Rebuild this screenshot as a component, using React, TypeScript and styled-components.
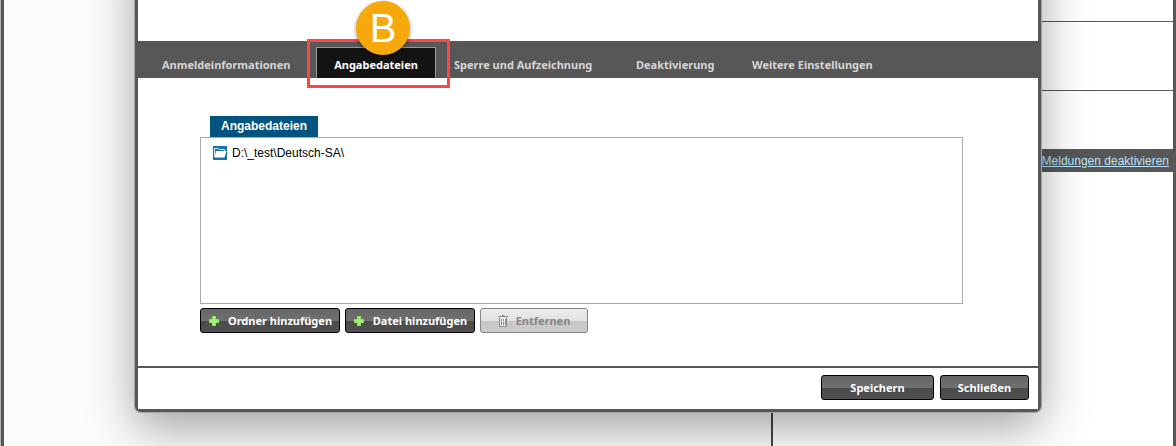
import React from "react";
import styled, { createGlobalStyle, css } from "styled-components";

const frame = "#575757";
const uiFont = '"Noto Sans", "Open Sans", sans-serif';
const textFont = '"Liberation Sans", Arial, sans-serif';

const GlobalStyle = createGlobalStyle`
  * { box-sizing: border-box; }
  body { margin: 0; background: #fff; font-family: ${textFont}; font-size: 12px; }
`;

const Page = styled.div`
  position: relative;
  display: flex;
  min-height: 100vh;
  overflow: hidden;
  border-left: 1px solid #b5b5b5;
`;

const LeftPane = styled.div`
  flex: 767 1 0;
  border-left: 3px solid ${frame};
  background: #fcfcfc;
`;

const RightPane = styled.aside`
  flex: 400 1 0;
  border-left: 2px solid #444;
  border-right: 3px solid ${frame};
  background: #fff;
`;

const PaneRow = styled.div<{ $height: number; $line?: boolean }>`
  height: ${(p) => p.$height}px;
  border-bottom: ${(p) => (p.$line ? `1px solid ${frame}` : "none")};
`;

const NoticeBar = styled.div`
  display: flex;
  justify-content: flex-end;
  align-items: center;
  height: 23px;
  padding-right: 4px;
  background: ${frame};
`;

const NoticeLink = styled.a`
  color: #b9e4fa;
  line-height: 16px;
`;

const Dialog = styled.section`
  position: absolute;
  top: -60px;
  left: 134px;
  right: 135px;
  border: 3px solid ${frame};
  border-radius: 6px;
  background: ${frame};
  box-shadow: 0 0 0 1px #a4a4a4, 0 16px 48px rgba(0, 0, 0, 0.36);
`;

const DialogHead = styled.header`
  height: 98px;
  background: #fff;
`;

const TabBar = styled.nav`
  display: flex;
  align-items: flex-end;
  height: 37px;
  padding-left: 8px;
  background: ${frame};
`;

const TabSlot = styled.div<{ $width: number }>`
  position: relative;
  flex: 0 0 ${(p) => p.$width}px;
`;

const Tab = styled.button<{ $active?: boolean }>`
  display: block;
  height: 31px;
  padding: 4px 15px 0;
  border: 1px solid transparent;
  border-bottom: 0;
  background: none;
  color: #d6d6d6;
  font: bold 11px/16px ${uiFont};
  white-space: nowrap;
  cursor: pointer;
  ${(p) =>
    p.$active &&
    css`
      width: 120px;
      border-color: #999;
      background: #131313;
      color: #fff;
    `}
`;

const Highlight = styled.span`
  position: absolute;
  top: -8px;
  left: -9px;
  width: 143px;
  height: 49px;
  border: 3px solid #fb4747;
  pointer-events: none;
`;

const Marker = styled.span`
  position: absolute;
  top: -46px;
  left: 40px;
  width: 54px;
  height: 54px;
  border-radius: 50%;
  background: #f7a90b;
  box-shadow: 0 2px 4px rgba(0, 0, 0, 0.4);
  color: #fff;
  font: 40px/54px ${textFont};
  text-align: center;
  pointer-events: none;
`;

const Body = styled.div`
  padding: 38px 75px 33px 62px;
  background: #fff;
`;

const ListTitle = styled.h2`
  width: fit-content;
  height: 21px;
  margin: 0 0 0 10px;
  padding: 0 11px;
  background: #00547f;
  color: #fff;
  font: bold 12px/21px ${textFont};
`;

const FileList = styled.ul`
  min-height: 167px;
  margin: 0;
  padding: 7px 12px;
  border: 1px solid #a9a9a9;
  list-style: none;
`;

const FileItem = styled.li`
  display: flex;
  align-items: center;
  gap: 5px;
  height: 16px;
  color: #000;
`;

const Actions = styled.div`
  display: flex;
  gap: 5px;
  margin-top: 4px;
`;

const Footer = styled.footer`
  display: flex;
  justify-content: flex-end;
  gap: 6px;
  margin-top: 2px;
  padding: 7px 9px 9px;
  background: #fff;
`;

const Button = styled.button<{ $width: number }>`
  display: flex;
  align-items: center;
  justify-content: center;
  gap: 8px;
  width: ${(p) => p.$width}px;
  height: 25px;
  padding: 1px 0 0;
  border: 1px solid #000;
  border-radius: 3px;
  background: linear-gradient(#666, #707070 50%, #4b4b4b 50%, #505050);
  color: #fff;
  font: bold 11px/16px ${uiFont};
  white-space: nowrap;
  cursor: pointer;
  &:disabled {
    border-color: #858585;
    background: linear-gradient(#ececec, #e2e2e2 50%, #c6c6c6 50%, #cdcdcd);
    color: #868686;
    cursor: default;
  }
`;

const PlusIcon = () => (
  <svg width="12" height="12" viewBox="0 0 12 12" aria-hidden="true">
    <path d="M4 1h4v3h3v4H8v3H4V8H1V4h3z" fill="#7fd655" />
    <path d="M4.500 1.500h3v3h3v3h-3v3h-3v-3h-3v-3h3z" fill="#a0ef76" />
  </svg>
);

const TrashIcon = () => (
  <svg width="10" height="14" viewBox="0 0 10 14" fill="none" stroke="#8b8b8b" aria-hidden="true">
    <path d="M1.500 3.500v9h7v-9" fill="#ececec" />
    <path d="M0 2.500h10M4 1.500h2M3.500 5v6M5.500 5v2M5.500 8v3M7.500 5v6" />
  </svg>
);

const FolderIcon = () => (
  <svg width="14" height="14" viewBox="0 0 14 14" aria-hidden="true">
    <rect width="14" height="14" fill="#1874a9" />
    <path d="M1.500 10.500v-8h4l1 1h5v2" fill="none" stroke="#d7e9f4" />
    <path d="M3 5h10.500l-2 6.500h-10z" fill="#fff" />
  </svg>
);

const tabs = [
  { label: "Anmeldeinformationen", width: 170 },
  { label: "Angabedateien", width: 122, active: true },
  { label: "Sperre und Aufzeichnung", width: 182 },
  { label: "Deaktivierung", width: 116 },
  { label: "Weitere Einstellungen", width: 156 },
];

export default function App() {
  return (
    <>
      <GlobalStyle />
      <Page>
        <LeftPane />
        <RightPane>
          <PaneRow $height={22} $line />
          <PaneRow $height={69} $line />
          <PaneRow $height={58} />
          <NoticeBar>
            <NoticeLink href="#meldungen">Meldungen deaktivieren</NoticeLink>
          </NoticeBar>
        </RightPane>
        <Dialog role="dialog" aria-label="Angabedateien">
          <DialogHead />
          <TabBar>
            {tabs.map((tab) => (
              <TabSlot key={tab.label} $width={tab.width}>
                <Tab type="button" $active={tab.active}>
                  {tab.label}
                </Tab>
                {tab.active && (
                  <>
                    <Highlight />
                    <Marker>B</Marker>
                  </>
                )}
              </TabSlot>
            ))}
          </TabBar>
          <Body>
            <ListTitle>Angabedateien</ListTitle>
            <FileList>
              <FileItem>
                <FolderIcon />
                D:\_test\Deutsch-SA\
              </FileItem>
            </FileList>
            <Actions>
              <Button type="button" $width={140}>
                <PlusIcon />
                Ordner hinzufügen
              </Button>
              <Button type="button" $width={130}>
                <PlusIcon />
                Datei hinzufügen
              </Button>
              <Button type="button" $width={108} disabled>
                <TrashIcon />
                Entfernen
              </Button>
            </Actions>
          </Body>
          <Footer>
            <Button type="button" $width={113}>
              Speichern
            </Button>
            <Button type="button" $width={89}>
              Schließen
            </Button>
          </Footer>
        </Dialog>
      </Page>
    </>
  );
}
